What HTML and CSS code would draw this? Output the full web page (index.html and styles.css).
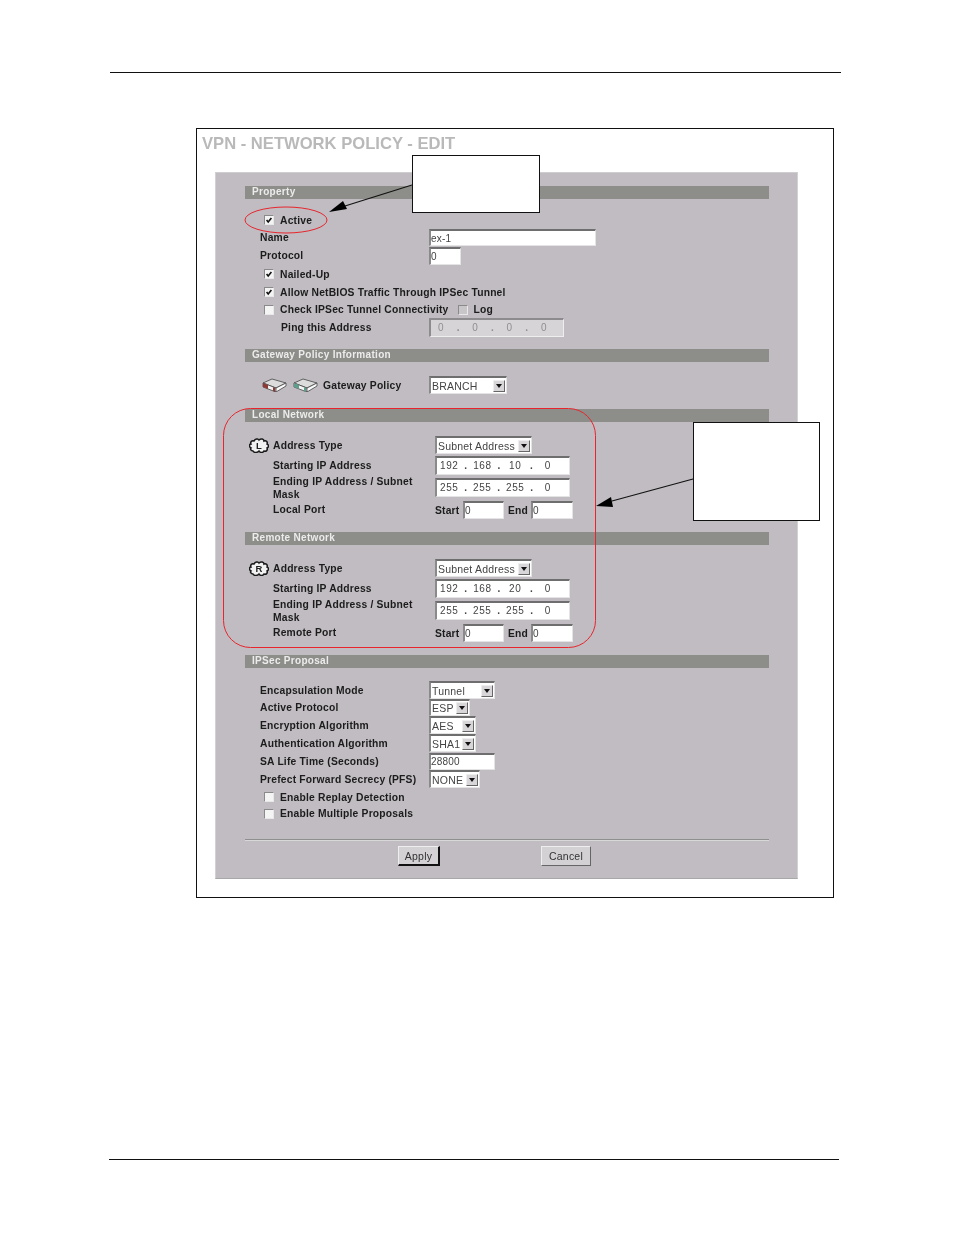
FILE: index.html
```html
<!DOCTYPE html>
<html lang="en">
<head>
<meta charset="utf-8">
<title>VPN - Network Policy - Edit</title>
<link rel="stylesheet" href="styles.css">
</head>
<body>
<div class="rule top-rule"></div>
<div class="figure">
  <h1 class="title">VPN - NETWORK POLICY - EDIT</h1>
  <div class="panel">
    <div class="bar">Property</div>
    <div class="row h18 mt12 ind-cb"><span class="cb"><svg viewBox="0 0 10 10"><path class="tick" d="M2 5l2 2.5L8 2.5"/></svg></span><span class="lbl">Active</span></div>
    <div class="row h17 ind"><span class="lbl col-a">Name</span><span class="field w167 h17f">ex-1</span></div>
    <div class="row h19 ind"><span class="lbl col-a">Protocol</span><span class="field w32 h18f">0</span></div>
    <div class="row h18 ind-cb"><span class="cb"><svg viewBox="0 0 10 10"><path class="tick" d="M2 5l2 2.5L8 2.5"/></svg></span><span class="lbl">Nailed-Up</span></div>
    <div class="row h18 ind-cb"><span class="cb"><svg viewBox="0 0 10 10"><path class="tick" d="M2 5l2 2.5L8 2.5"/></svg></span><span class="lbl">Allow NetBIOS Traffic Through IPSec Tunnel</span></div>
    <div class="row h17 ind-cb"><span class="cb"></span><span class="lbl">Check IPSec Tunnel Connectivity</span><span class="cb cb-off log-cb"></span><span class="lbl">Log</span></div>
    <div class="row h18 ind-ping"><span class="lbl col-ping">Ping this Address</span><span class="field ip ip-off w135 h19f"><i>0</i><b>.</b><i>0</i><b>.</b><i>0</i><b>.</b><i>0</i></span></div>

    <div class="bar mt13">Gateway Policy Information</div>
    <div class="row h18 mt14 ind-gw">
      <svg class="gw" viewBox="0 0 25 14"><path class="gw-top" d="M1 5 10 1l14 4-10 5Z"/><path class="gw-front" d="M1 5l13 5v4L1 9Z"/><path class="gw-end" d="M14 10l10-5v3l-10 6Z"/><path class="gw-red" d="M1 5l5 2v4L1 9Z"/><path class="gw-red" d="M11 9l2 1v4l-2-1Z"/></svg>
      <svg class="gw gw2" viewBox="0 0 25 14"><path class="gw-top" d="M1 5 10 1l14 4-10 5Z"/><path class="gw-front" d="M1 5l13 5v4L1 9Z"/><path class="gw-end" d="M14 10l10-5v3l-10 6Z"/><path class="gw-green" d="M1 5l5 2v4L1 9Z"/><path class="gw-green" d="M11 9l2 1v4l-2-1Z"/></svg>
      <span class="lbl col-gw">Gateway Policy</span>
      <span class="field sel w78 h18f"><em>BRANCH</em><u class="arrow"></u></span>
    </div>

    <div class="bar mt15">Local Network</div>
    <div class="row h18 mt14 ind-net">
      <svg class="cloud" viewBox="0 0 20 15"><path class="cloud-path" d="M4 13C2 13 1 11 2 10 0 9 0 6 2 6 1 4 3 2 5 3 6 1 9 0 10 2 12 0 15 1 15 3 17 2 19 4 18 6 20 7 20 9 18 10 19 12 17 14 15 13 14 15 11 15 10 13 8 15 5 15 4 13Z"/><text class="cloud-text" x="10" y="11" text-anchor="middle">L</text></svg>
      <span class="lbl col-net">Address Type</span><span class="field sel w97 h18f"><em>Subnet Address</em><u class="arrow"></u></span>
    </div>
    <div class="row h22 ind-net2"><span class="lbl col-net">Starting IP Address</span><span class="field ip w135 h19f"><i>192</i><b>.</b><i>168</i><b>.</b><i>10</i><b>.</b><i>0</i></span></div>
    <div class="row h22 ind-net2"><span class="lbl col-net wrap">Ending IP Address / Subnet Mask</span><span class="field ip w135 h19f"><i>255</i><b>.</b><i>255</i><b>.</b><i>255</i><b>.</b><i>0</i></span></div>
    <div class="row h24 ind-net2"><span class="lbl col-net port-lbl">Local Port</span><span class="lbl se-s">Start</span><span class="field w41 h18f">0</span><span class="lbl se-e">End</span><span class="field w42 h18f">0</span></div>

    <div class="bar mt10">Remote Network</div>
    <div class="row h18 mt14 ind-net">
      <svg class="cloud" viewBox="0 0 20 15"><path class="cloud-path" d="M4 13C2 13 1 11 2 10 0 9 0 6 2 6 1 4 3 2 5 3 6 1 9 0 10 2 12 0 15 1 15 3 17 2 19 4 18 6 20 7 20 9 18 10 19 12 17 14 15 13 14 15 11 15 10 13 8 15 5 15 4 13Z"/><text class="cloud-text" x="10" y="11" text-anchor="middle">R</text></svg>
      <span class="lbl col-net">Address Type</span><span class="field sel w97 h18f"><em>Subnet Address</em><u class="arrow"></u></span>
    </div>
    <div class="row h22 ind-net2"><span class="lbl col-net">Starting IP Address</span><span class="field ip w135 h19f"><i>192</i><b>.</b><i>168</i><b>.</b><i>20</i><b>.</b><i>0</i></span></div>
    <div class="row h22 ind-net2"><span class="lbl col-net wrap">Ending IP Address / Subnet Mask</span><span class="field ip w135 h19f"><i>255</i><b>.</b><i>255</i><b>.</b><i>255</i><b>.</b><i>0</i></span></div>
    <div class="row h24 ind-net2"><span class="lbl col-net port-lbl">Remote Port</span><span class="lbl se-s">Start</span><span class="field w41 h18f">0</span><span class="lbl se-e">End</span><span class="field w42 h18f">0</span></div>

    <div class="bar mt10">IPSec Proposal</div>
    <div class="row h18 mt13 ind"><span class="lbl col-a">Encapsulation Mode</span><span class="field sel w66 h18f"><em>Tunnel</em><u class="arrow"></u></span></div>
    <div class="row h17 ind"><span class="lbl col-a">Active Protocol</span><span class="field sel w41 h17f"><em>ESP</em><u class="arrow"></u></span></div>
    <div class="row h18 ind"><span class="lbl col-a">Encryption Algorithm</span><span class="field sel w47 h18f"><em>AES</em><u class="arrow"></u></span></div>
    <div class="row h18 ind"><span class="lbl col-a">Authentication Algorithm</span><span class="field sel w47 h18f"><em>SHA1</em><u class="arrow"></u></span></div>
    <div class="row h18 ind"><span class="lbl col-a">SA Life Time (Seconds)</span><span class="field w66 h17f">28800</span></div>
    <div class="row h18 ind"><span class="lbl col-a">Prefect Forward Secrecy (PFS)</span><span class="field sel w51 h18f"><em>NONE</em><u class="arrow"></u></span></div>
    <div class="row h18 ind-cb"><span class="cb"></span><span class="lbl">Enable Replay Detection</span></div>
    <div class="row h15 ind-cb"><span class="cb"></span><span class="lbl">Enable Multiple Proposals</span></div>

    <div class="divider"></div>
    <div class="actions"><span class="btn btn-default">Apply</span><span class="btn btn-cancel">Cancel</span></div>
  </div>
  <svg class="overlay" viewBox="196 128 638 770">
    <ellipse class="red" cx="286" cy="220" rx="41" ry="13"/>
    <rect class="red" x="223.5" y="408.5" width="372" height="239" rx="27"/>
    <rect class="box" x="412.5" y="155.5" width="127" height="57"/>
    <rect class="box" x="693.5" y="422.5" width="126" height="98"/>
    <path class="lead" d="M412 185 345 206"/>
    <path class="head" d="M329 212 343 201 347 209Z"/>
    <path class="lead" d="M693 479 612 501"/>
    <path class="head" d="M596 506 611 497 613 507Z"/>
  </svg>
</div>
<div class="rule bottom-rule"></div>
</body>
</html>
```
FILE: styles.css
```css
html, body { margin: 0; padding: 0; background: #fff; }
body { width: 954px; height: 1235px; overflow: hidden; font-family: "Liberation Sans", Arial, sans-serif; }

.rule { height: 1px; background: #111; }
.top-rule { margin: 72px 0 0 110px; width: 731px; }
.bottom-rule { margin: 261px 0 0 109px; width: 730px; }

.figure { position: relative; box-sizing: border-box; margin: 55px 0 0 196px; width: 638px; height: 770px; border: 1px solid #111; }
.title { margin: 0; padding: 4px 0 0 5px; height: 22px; line-height: 22px; font-size: 16.6px; font-weight: 700; color: #b9b9b9; white-space: nowrap; filter: blur(.3px); }

.panel { box-sizing: border-box; margin: 17px 0 0 18px; width: 583px; height: 707px; padding: 13px 28px 0 29px; background: #c0bcc1; border-right: 1px solid #d3d1d4; border-bottom: 1px solid #a9a8a9; border-left: 1px solid #d3d1d4; border-top: 1px solid #cfcdd0; filter: blur(.3px); }

.bar { height: 13px; line-height: 12px; padding-left: 7px; background: #8d8e89; color: #ececec; font-size: 10px; font-weight: 700; letter-spacing: .3px; white-space: nowrap; }

.row { display: flex; align-items: center; white-space: nowrap; }
.h15 { height: 15px; } .h17 { height: 17px; } .h18 { height: 18px; } .h19 { height: 19px; }
.h22 { height: 22px; } .h24 { height: 24px; }
.mt10 { margin-top: 10px; } .mt12 { margin-top: 12px; } .mt13 { margin-top: 13px; } .mt14 { margin-top: 14px; } .mt15 { margin-top: 15px; }

.ind { padding-left: 15px; }
.ind-cb { padding-left: 19px; }
.ind-ping { padding-left: 36px; }
.ind-gw { padding-left: 17px; }
.ind-net { padding-left: 4px; }
.ind-net2 { padding-left: 28px; }

.lbl { font-size: 10.3px; font-weight: 700; color: #1c1c1c; letter-spacing: .2px; line-height: 13px; }
.col-a { width: 169px; flex: none; }
.col-ping { width: 148px; flex: none; }
.col-gw { width: 106px; flex: none; margin-left: 5px; }
.col-net { width: 162px; flex: none; }
.wrap { white-space: normal; padding: 2px 8px 0 0; box-sizing: border-box; }
.port-lbl { margin-top: -1px; }
.cloud + .col-net { margin-left: 4px; }

.cb { box-sizing: border-box; flex: none; width: 10px; height: 10px; margin-right: 6px; background: #f4f4f4; border: 1px solid; border-color: #8a8a8a #e8e8e8 #e8e8e8 #8a8a8a; }
.cb svg { display: block; width: 8px; height: 8px; }
.tick { fill: none; stroke: #111; stroke-width: 2; }
.cb-off { background: #c9c6ca; }
.log-cb { margin-left: 9px; margin-right: 6px; }

.field { box-sizing: border-box; flex: none; display: flex; align-items: center; background: #fff; border-style: solid; border-width: 2px 1px 1px 2px; border-color: #6e6e6e #e4e4e4 #e4e4e4 #8a8a8a; font-size: 10px; letter-spacing: .2px; color: #444; padding-left: 0; }
.w32 { width: 32px; } .w41 { width: 41px; } .w42 { width: 42px; } .w47 { width: 47px; } .w51 { width: 51px; }
.w66 { width: 66px; } .w78 { width: 78px; } .w97 { width: 97px; } .w135 { width: 135px; } .w167 { width: 167px; }
.h17f { height: 17px; } .h18f { height: 18px; } .h19f { height: 19px; }

.ip { justify-content: space-between; padding: 0 12px 0 3px; }
.ip i { font-style: normal; min-width: 18px; text-align: center; letter-spacing: .6px; }
.ip b { font-weight: 700; }
.ip-off { background: #d6d4d7; color: #8f8f8f; border-color: #8d8b8e #eee #eee #8d8b8e; }
.ip-off i { min-width: 14px; }

.sel { padding-left: 1px; justify-content: space-between; padding-right: 1px; font-size: 10.5px; }
.sel em { font-style: normal; }
.arrow { box-sizing: border-box; position: relative; flex: none; width: 12px; height: 12px; background: #d8d6d9; border: 1px solid; border-color: #eee #666 #666 #eee; }
.arrow::after { content: ""; position: absolute; left: 2px; top: 3px; border-style: solid; border-width: 4px 3px 0; border-color: #111 transparent transparent; }

.se-s { width: 28px; flex: none; }
.se-e { width: 23px; flex: none; margin-left: 4px; }

.gw { flex: none; width: 25px; height: 14px; }
.gw2 { margin-left: 6px; }
.gw-top { fill: #dcdcdc; stroke: #444; stroke-width: .8; }
.gw-front { fill: #f4f4f4; stroke: #444; stroke-width: .8; }
.gw-end { fill: #fafafa; stroke: #444; stroke-width: .8; }
.gw-red { fill: #8d3a36; }
.gw-green { fill: #5f9d8c; }

.cloud { flex: none; width: 20px; height: 15px; }
.cloud-path { fill: #f2f2f2; stroke: #1a1a1a; stroke-width: 1.5; }
.cloud-text { font: 700 9.5px "Liberation Sans", Arial, sans-serif; fill: #222; }

.divider { margin-top: 18px; height: 1px; background: #8f8f8f; border-bottom: 1px solid #d8d8d8; }
.actions { display: flex; align-items: flex-start; padding: 5px 0 0 153px; }
.btn { box-sizing: border-box; height: 20px; display: flex; align-items: center; justify-content: center; background: #d3d1d4; font-size: 10.5px; letter-spacing: .2px; color: #333; border: 1px solid; }
.btn-default { width: 42px; border-color: #eee #111 #111 #eee; border-width: 1px 2px 2px 1px; }
.btn-cancel { width: 50px; margin-left: 101px; border-color: #eee #666 #666 #eee; }

.overlay { position: absolute; left: -1px; top: -1px; width: 638px; height: 770px; }
.red { fill: none; stroke: #e8252d; stroke-width: 1; }
.box { fill: #fff; stroke: #111; stroke-width: 1; }
.lead { fill: none; stroke: #111; stroke-width: 1.1; }
.head { fill: #000; }
```
